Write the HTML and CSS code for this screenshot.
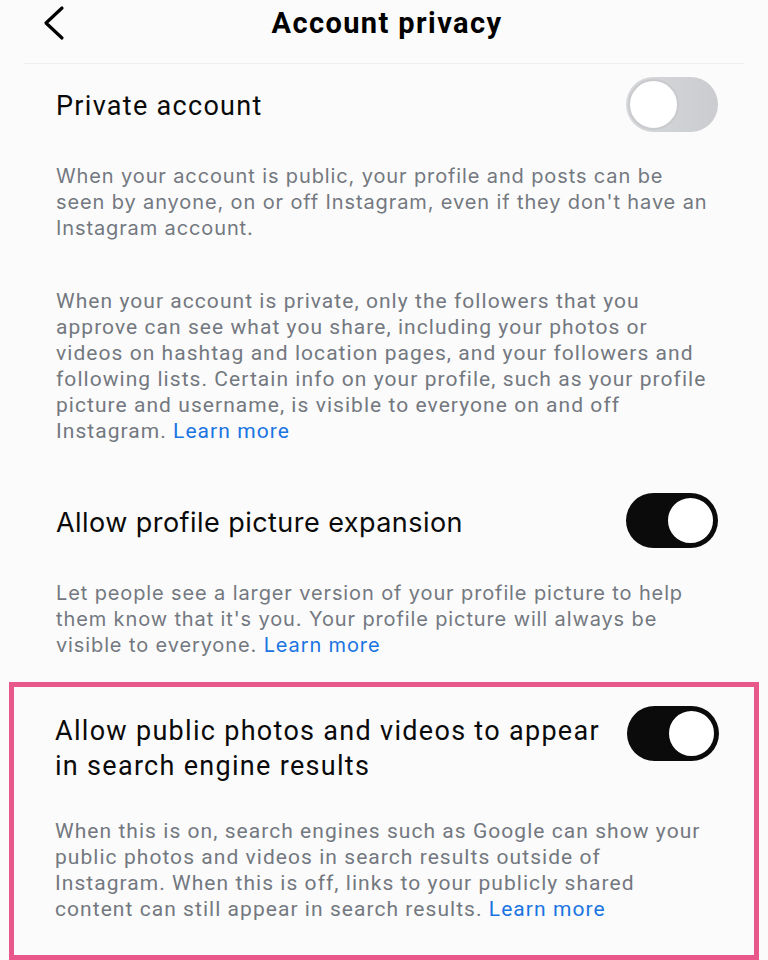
FILE: index.html
```html
<!DOCTYPE html>
<html>
<head>
<meta charset="utf-8">
<link rel="stylesheet" href="styles.css">
</head>
<body>
<div class="page">
  <header class="topbar">
    <svg class="back" width="24" height="36" viewBox="0 0 24 36"><path d="M20 3 L4 18 L20 33" fill="none" stroke="#000" stroke-width="3.2" stroke-linecap="round" stroke-linejoin="round"/></svg>
    <h1 class="title">Account privacy</h1>
  </header>

  <section class="sec sec-private">
    <div class="row">
      <div class="label narrow">Private account</div>
      <div class="toggle off"><span class="knob"></span></div>
    </div>
    <p class="desc wide p1">When your account is public, your profile and posts can be seen by anyone, on or off Instagram, even if they don't have an Instagram account.</p>
    <p class="desc narrow p2">When your account is private, only the followers that you approve can see what you share, including your photos or videos on hashtag and location pages, and your followers and following lists. Certain info on your profile, such as your profile picture and username, is visible to everyone on and off Instagram. <a class="link">Learn more</a></p>
  </section>

  <section class="sec sec-expand">
    <div class="row">
      <div class="label wide">Allow profile picture expansion</div>
      <div class="toggle on"><span class="knob"></span></div>
    </div>
    <p class="desc wide p3">Let people see a larger version of your profile picture to help them know that it's you. Your profile picture will always be visible to everyone. <a class="link">Learn more</a></p>
  </section>

  <section class="highlight">
    <div class="row top">
      <div class="label narrow two">Allow public photos and videos to appear in search engine results</div>
      <div class="toggle on"><span class="knob"></span></div>
    </div>
    <p class="desc narrow p4">When this is on, search engines such as Google can show your public photos and videos in search results outside of Instagram. When this is off, links to your publicly shared content can still appear in search results. <a class="link">Learn more</a></p>
  </section>
</div>
</body>
</html>
```
FILE: styles.css
```css
html, body {
  margin: 0;
  padding: 0;
  background: #fbfbfb;
}
body {
  width: 768px;
  height: 960px;
  overflow: hidden;
  font-family: Roboto, "Liberation Sans", sans-serif;
  color: #0a0a0a;
}
.page {
  display: flex;
  flex-direction: column;
}
.topbar {
  height: 63px;
  display: flex;
  align-items: center;
  justify-content: center;
  position: relative;
  margin: 0 24px;
  border-bottom: 1px solid #efefef;
}
.back {
  position: absolute;
  left: 18px;
  top: 5px;
}
.title {
  margin: 0 0 18px 6px;
  font-family: Roboto, "Liberation Sans", sans-serif;
  font-weight: 700;
  font-size: 29px;
  letter-spacing: 1.4px;
  color: #000;
}
.sec {
  padding: 0 50px 0 56px;
}
.sec-private {
  padding-top: 13px;
}
.sec-expand {
  padding-top: 49px;
}
.row {
  display: flex;
  align-items: center;
  justify-content: space-between;
  gap: 12px;
}
.row.top {
  align-items: flex-start;
}
.label {
  font-size: 27px;
  line-height: 35px;
  padding-top: 4px;
}
.label.narrow {
  letter-spacing: 1.3px;
}
.label.wide {
  letter-spacing: 0.45px;
}
.label.two {
  margin-top: 8px;
  padding-top: 0;
  flex: 1;
}
.narrow {
  font-family: Roboto, "Liberation Sans", sans-serif;
}
.wide {
  font-family: Inter, "Open Sans", sans-serif;
}
.desc {
  margin: 0 8px 0 0;
  line-height: 26px;
  color: #737880;
}
.desc.narrow {
  font-size: 21px;
  letter-spacing: 1.05px;
}
.desc.wide {
  font-size: 20px;
  letter-spacing: 0.88px;
}
.p1 { margin-top: 31px; }
.p2 { margin-top: 47px; }
.p3 { margin-top: 32px; }
.p4 { margin-top: 34px; }
.link {
  color: #1a74e2;
}
.toggle {
  width: 92px;
  height: 55px;
  border-radius: 28px;
  box-sizing: border-box;
  position: relative;
  flex: none;
}
.toggle.off {
  background: linear-gradient(90deg, #d7d8da, #cbcccf);
}
.toggle.on {
  background: #0b0b0b;
}
.knob {
  position: absolute;
  top: 2px;
  width: 51px;
  height: 51px;
  border-radius: 50%;
  background: #fff;
  box-sizing: border-box;
}
.off .knob {
  left: 2px;
  border: 2px solid #c9cacd;
}
.on .knob {
  right: 2px;
  border: 3px solid #0b0b0b;
}
.highlight {
  margin: 24px 9px 0 9px;
  border: 5px solid #e8588b;
  padding: 19px 35px 33px 41px;
}
```
